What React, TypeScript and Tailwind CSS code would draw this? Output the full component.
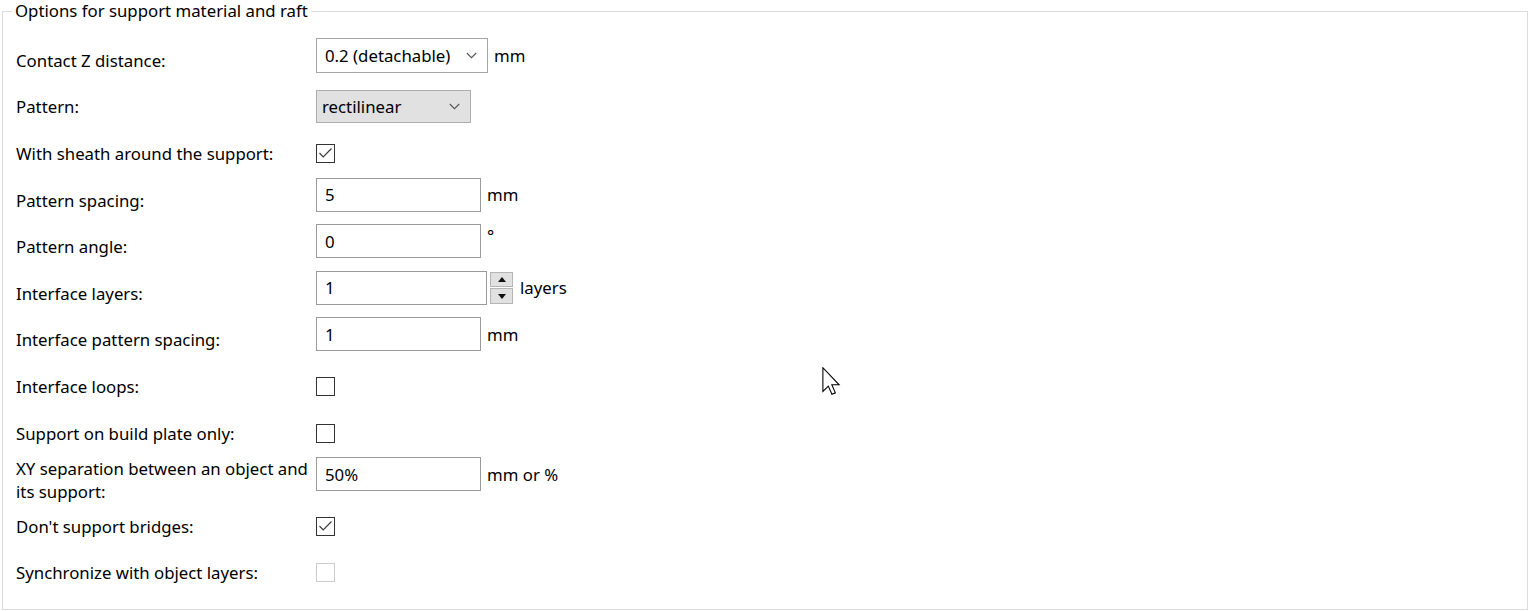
import React from "react";

type Ctl =
  | { kind: "combo"; value: string; gray?: boolean; w: number; unit?: string }
  | { kind: "check"; checked: boolean; disabled?: boolean }
  | { kind: "input"; value: string; unit: string }
  | { kind: "spin"; value: string; unit: string };

type Row = { label: React.ReactNode; ctl: Ctl };

const ROWS: Row[] = [
  { label: "Contact Z distance:", ctl: { kind: "combo", value: "0.2 (detachable)", w: 172, unit: "mm" } },
  { label: "Pattern:", ctl: { kind: "combo", value: "rectilinear", gray: true, w: 155 } },
  { label: "With sheath around the support:", ctl: { kind: "check", checked: true } },
  { label: "Pattern spacing:", ctl: { kind: "input", value: "5", unit: "mm" } },
  { label: "Pattern angle:", ctl: { kind: "input", value: "0", unit: "°" } },
  { label: "Interface layers:", ctl: { kind: "spin", value: "1", unit: "layers" } },
  { label: "Interface pattern spacing:", ctl: { kind: "input", value: "1", unit: "mm" } },
  { label: "Interface loops:", ctl: { kind: "check", checked: false } },
  { label: "Support on build plate only:", ctl: { kind: "check", checked: false } },
  {
    label: (
      <>
        XY separation between an object and
        <br />
        its support:
      </>
    ),
    ctl: { kind: "input", value: "50%", unit: "mm or %" },
  },
  { label: "Don't support bridges:", ctl: { kind: "check", checked: true } },
  { label: "Synchronize with object layers:", ctl: { kind: "check", checked: false, disabled: true } },
];

function Chevron() {
  return (
    <svg width="11" height="7" viewBox="0 0 11 7" className="flex-none">
      <path d="M0.8 1 L5.5 5.7 L10.2 1" fill="none" stroke="#555" strokeWidth="1.1" />
    </svg>
  );
}

function Control({ ctl }: { ctl: Ctl }) {
  if (ctl.kind === "check") {
    return (
      <div
        className={`flex h-[19px] w-[19px] items-center justify-center border bg-white ${
          ctl.disabled ? "border-[#cccccc]" : "border-[#333333]"
        }`}
      >
        {ctl.checked && (
          <svg width="15" height="12" viewBox="0 0 15 12">
            <path d="M1.5 6 L5.2 9.8 L13.5 1.5" fill="none" stroke="#3a3a3a" strokeWidth="1.2" />
          </svg>
        )}
      </div>
    );
  }
  if (ctl.kind === "combo") {
    return (
      <div className={`flex items-center ${ctl.gray ? "" : "mb-[10px]"}`}>
        <div
          style={{ width: ctl.w }}
          className={`flex items-center justify-between border pr-[10px] ${
            ctl.gray
              ? "h-[33px] border-[#adadad] bg-[#e1e1e1] pl-[5px]"
              : "h-[35px] border-[#a6a6a6] bg-white pl-[8px]"
          }`}
        >
          <span className="whitespace-nowrap">{ctl.value}</span>
          <Chevron />
        </div>
        {ctl.unit && <span className="ml-[6px]">{ctl.unit}</span>}
      </div>
    );
  }
  const input = (w: string) => (
    <div className={`flex h-[34px] items-center border border-[#9a9a9a] bg-white pl-[8px] ${w}`}>{ctl.value}</div>
  );
  if (ctl.kind === "spin") {
    return (
      <div className="mb-[11px] flex items-center">
        {input("w-[171px]")}
        <div className="ml-[3px] flex h-[32px] w-[23px] flex-col gap-[1px]">
          <div className="flex flex-1 items-center justify-center border border-[#b5b5b5] bg-[#e1e1e1]">
            <svg width="8" height="5" viewBox="0 0 8 5">
              <path d="M0 5 L4 0 L8 5 Z" fill="#111" />
            </svg>
          </div>
          <div className="flex flex-1 items-center justify-center border border-[#b5b5b5] bg-[#e1e1e1]">
            <svg width="8" height="5" viewBox="0 0 8 5">
              <path d="M0 0 L8 0 L4 5 Z" fill="#111" />
            </svg>
          </div>
        </div>
        <span className="ml-[7px]">{ctl.unit}</span>
      </div>
    );
  }
  return (
    <div className="mb-[11px] flex items-center">
      {input("w-[165px]")}
      <span className={`ml-[6px] ${ctl.unit === "°" ? "mb-[12px]" : ""}`}>{ctl.unit}</span>
    </div>
  );
}

export default function App() {
  return (
    <div className="relative h-[611px] w-[1529px] overflow-hidden bg-white font-['Noto_Sans',sans-serif] text-[16.8px] text-black">
      <div className="relative ml-[2px] mt-[11px] h-[599px] w-[1526px] border border-[#dcdcdc] pl-[13px] pt-[25px]">
        <span className="absolute -top-[12px] left-[9px] bg-white px-[3px] leading-[22px]">
          Options for support material and raft
        </span>
        <div className="flex flex-col">
          {ROWS.map((row, i) => (
            <div key={i} className="flex h-[46.6px] items-center">
              <div className="w-[300px] flex-none leading-[23px]">{row.label}</div>
              <Control ctl={row.ctl} />
            </div>
          ))}
        </div>
      </div>
      <svg
        className="absolute left-[822px] top-[367px]"
        width="19"
        height="28"
        viewBox="0 0 13 19.5"
      >
        <path
          d="M0.5 0.5 L0.5 17 L4.3 13.3 L6.8 19 L9.2 18 L6.7 12.4 L11.8 12.4 Z"
          fill="#fff"
          stroke="#000"
          strokeWidth="0.75"
          strokeLinejoin="miter"
        />
      </svg>
    </div>
  );
}
